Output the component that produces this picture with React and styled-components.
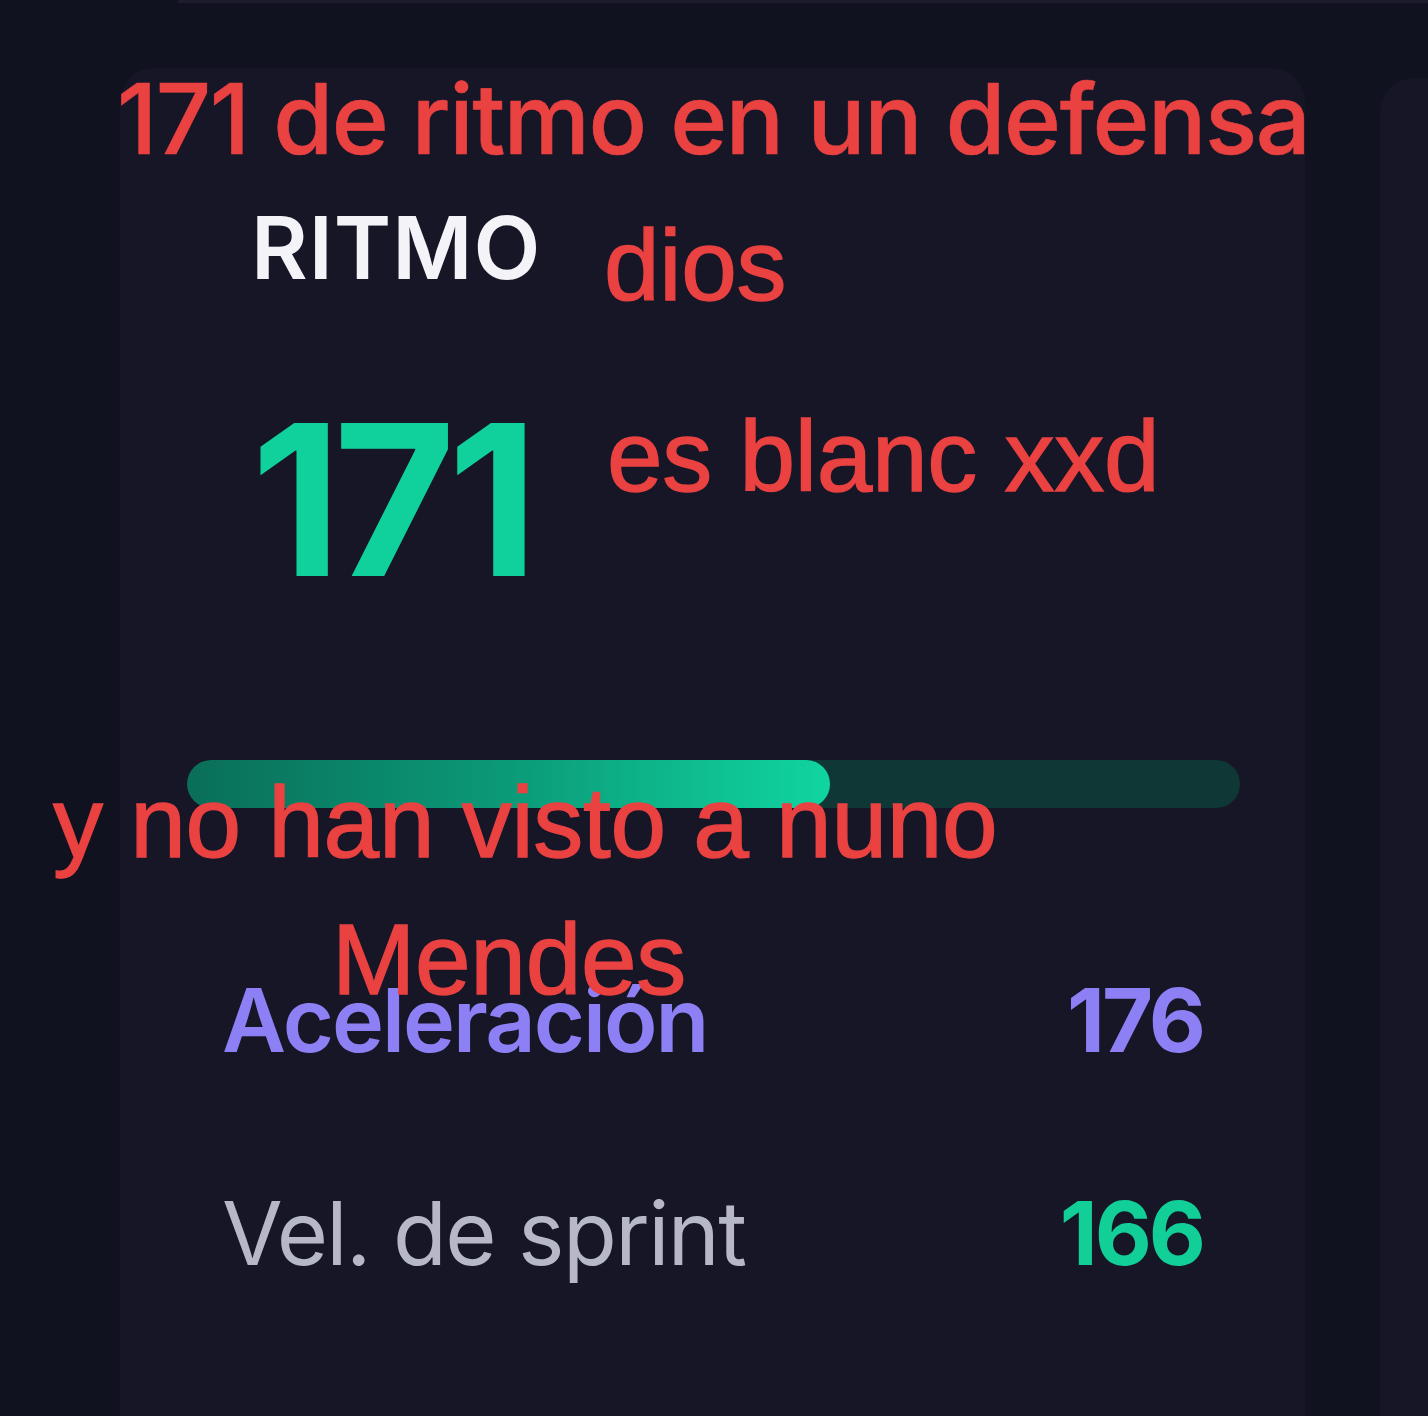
import styled, { createGlobalStyle } from "styled-components";

const GlobalStyle = createGlobalStyle`
  html, body {
    margin: 0;
    padding: 0;
    background: #11121f;
  }
  body {
    font-family: Inter, "Noto Sans", sans-serif;
  }
`;

const stats = [
  { label: "Aceleración", value: 176, tone: "purple" },
  { label: "Vel. de sprint", value: 166, tone: "green" },
];

// captions laid over the screenshot, like a video overlay
const captions = [
  { text: "171 de ritmo en un defensa", top: 70, left: 117, wide: true },
  { text: "dios", top: 215, left: 604 },
  { text: "es blanc xxd", top: 406, left: 607 },
  { text: "y no han visto a nuno", top: 772, left: 53 },
  { text: "Mendes", top: 909, left: 332 },
];

const App = () => {
  const pace = 171;
  const fill = `${(pace / 280) * 100}%`;

  return (
    <Page>
      <GlobalStyle />
      <TopEdge />
      <Row>
        <Card>
          <Header>
            <Title>RITMO</Title>
            <BigValue>{pace}</BigValue>
          </Header>
          <Track>
            <Fill style={{ width: fill }} />
          </Track>
          <StatList>
            {stats.map((s) => (
              <StatRow key={s.label}>
                <StatLabel tone={s.tone}>{s.label}</StatLabel>
                <StatValue tone={s.tone}>{s.value}</StatValue>
              </StatRow>
            ))}
          </StatList>
        </Card>
        <SideCard />
      </Row>
      {captions.map((c) => (
        <Caption
          key={c.text}
          wide={c.wide}
          style={{ top: c.top, left: c.left }}
        >
          {c.text}
        </Caption>
      ))}
    </Page>
  );
};

export default App;

const Page = styled.div`
  position: relative;
  width: 1428px;
  height: 1416px;
  overflow: hidden;
  background: #11121f;
`;

const TopEdge = styled.div`
  height: 3px;
  margin-left: 178px;
  background: #1c1c2d;
`;

const Row = styled.div`
  display: flex;
  align-items: flex-start;
  gap: 75px;
  margin-top: 65px;
  padding-left: 120px;
`;

const Card = styled.div`
  width: 1185px;
  height: 1400px;
  flex-shrink: 0;
  background: #161627;
  border-radius: 34px;
  padding-top: 136px;
  box-sizing: border-box;
`;

const SideCard = styled.div`
  width: 200px;
  height: 1400px;
  flex-shrink: 0;
  margin-top: 10px;
  background: #161627;
  border-radius: 34px;
`;

const Header = styled.div`
  display: flex;
  flex-direction: column;
  gap: 104px;
  padding-left: 131px;
`;

const Title = styled.div`
  font-size: 87px;
  line-height: 1;
  font-weight: 600;
  letter-spacing: 1px;
  color: #f4f4f8;
`;

const BigValue = styled.div`
  font-size: 210px;
  line-height: 1;
  font-weight: 700;
  letter-spacing: -8px;
  color: #10d19b;
`;

const Track = styled.div`
  margin: 155px 65px 0 67px;
  height: 48px;
  border-radius: 24px;
  background: #0e3735;
  overflow: hidden;
`;

const Fill = styled.div`
  height: 100%;
  border-radius: 24px;
  background: linear-gradient(90deg, #0a6e58 0%, #0b9a78 50%, #10d5a0 100%);
`;

const StatList = styled.div`
  display: flex;
  flex-direction: column;
  gap: 125px;
  margin-top: 168px;
  padding: 0 102px;
`;

const StatRow = styled.div`
  display: flex;
  justify-content: space-between;
  align-items: baseline;
`;

const StatLabel = styled.div`
  font-size: 88px;
  line-height: 1;
  font-weight: ${(p) => (p.tone === "purple" ? 600 : 400)};
  letter-spacing: ${(p) => (p.tone === "purple" ? "-2px" : "-1.6px")};
  color: ${(p) => (p.tone === "purple" ? "#8d7ff4" : "#b6b7c7")};
`;

const StatValue = styled.div`
  font-size: 88px;
  line-height: 1;
  font-weight: 700;
  letter-spacing: -3px;
  color: ${(p) => (p.tone === "purple" ? "#8d7ff4" : "#12cf98")};
`;

const Caption = styled.div`
  position: absolute;
  white-space: nowrap;
  color: #ea4141;
  line-height: 1;
  font-family: ${(p) =>
    p.wide ? 'Inter, "Noto Sans", sans-serif' : '"Liberation Sans", Arial, sans-serif'};
  font-size: ${(p) => (p.wide ? "97px" : "100px")};
  font-weight: ${(p) => (p.wide ? 500 : 400)};
  letter-spacing: ${(p) => (p.wide ? "-1.4px" : "-0.3px")};
  -webkit-text-stroke: ${(p) => (p.wide ? "0.6px" : "1.4px")} #ea4141;
`;
